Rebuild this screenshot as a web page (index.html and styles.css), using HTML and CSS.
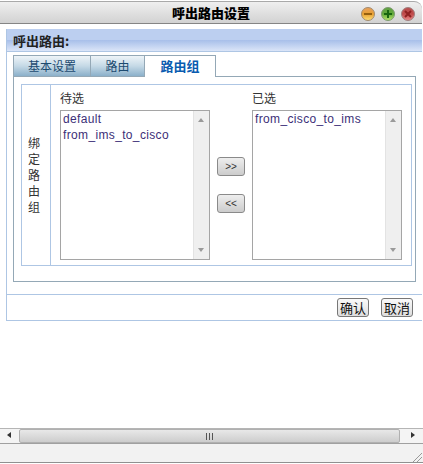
FILE: index.html
```html
<!DOCTYPE html>
<html lang="zh">
<head>
<meta charset="utf-8">
<title>呼出路由设置</title>
<link rel="stylesheet" href="styles.css">
</head>
<body>
<div class="window">
  <header class="titlebar">
    <span class="title">呼出路由设置</span>
    <div class="controls">
      <svg class="ctl" viewBox="0 0 14 14"><defs><linearGradient id="o" x1="0" y1="0" x2="0" y2="1"><stop offset="0" stop-color="#e8a060"/><stop offset=".5" stop-color="#e8a030"/><stop offset="1" stop-color="#ffe27a"/></linearGradient></defs><circle cx="7" cy="7" r="6.5" fill="url(#o)" stroke="#a08a70"/><rect x="3" y="6" width="8" height="2" fill="#96600e"/></svg>
      <svg class="ctl" viewBox="0 0 14 14"><defs><linearGradient id="g" x1="0" y1="0" x2="0" y2="1"><stop offset="0" stop-color="#5fa044"/><stop offset=".5" stop-color="#62aa3a"/><stop offset="1" stop-color="#bce870"/></linearGradient></defs><circle cx="7" cy="7" r="6.5" fill="url(#g)" stroke="#7c9a70"/><path d="M3 7h8M7 3v8" stroke="#17660f" stroke-width="2"/></svg>
      <svg class="ctl" viewBox="0 0 14 14"><defs><linearGradient id="r" x1="0" y1="0" x2="0" y2="1"><stop offset="0" stop-color="#b85050"/><stop offset=".5" stop-color="#c04a4a"/><stop offset="1" stop-color="#ea8a8a"/></linearGradient></defs><circle cx="7" cy="7" r="6.5" fill="url(#r)" stroke="#a08080"/><path d="M4 4l6 6M10 4l-6 6" stroke="#8e2020" stroke-width="2"/></svg>
    </div>
  </header>

  <section class="panel">
    <h1 class="panel-head">呼出路由:</h1>
    <div class="panel-body">
      <nav class="tabs">
        <span class="tab tab-first">基本设置</span>
        <span class="tab tab-second">路由</span>
        <span class="tab tab-active">路由组</span>
      </nav>
      <div class="tab-box">
        <div class="bind">
          <div class="bind-label">
            <span class="bind-char">绑</span>
            <span class="bind-char">定</span>
            <span class="bind-char">路</span>
            <span class="bind-char">由</span>
            <span class="bind-char">组</span>
          </div>
          <div class="bind-main">
            <div class="col">
              <div class="col-label">待选</div>
              <div class="list">
                <div class="items">
                  <div>default</div>
                  <div>from_ims_to_cisco</div>
                </div>
                <div class="vscroll"><i class="up"></i><i class="down"></i></div>
              </div>
            </div>
            <div class="moves">
              <button class="move">&gt;&gt;</button>
              <button class="move">&lt;&lt;</button>
            </div>
            <div class="col">
              <div class="col-label">已选</div>
              <div class="list">
                <div class="items">
                  <div>from_cisco_to_ims</div>
                </div>
                <div class="vscroll"><i class="up"></i><i class="down"></i></div>
              </div>
            </div>
          </div>
        </div>
      </div>
    </div>
    <footer class="panel-foot">
      <button class="action">确认</button>
      <button class="action">取消</button>
    </footer>
  </section>

  <div class="spacer"></div>

  <div class="hscroll">
    <i class="left"></i>
    <div class="thumb"><span class="grip"></span></div>
    <i class="right"></i>
  </div>
  <div class="status">
    <svg class="resize" viewBox="0 0 10 10"><path d="M1 10L10 1M5 10l5-5" stroke="#999" fill="none"/></svg>
  </div>
</div>
</body>
</html>
```

FILE: styles.css
```css
* { box-sizing: border-box; }
html, body { margin: 0; padding: 0; background: #fff; overflow: hidden; }
body { font-family: "Noto Sans CJK SC", "Liberation Sans", sans-serif; color: #333; }

.window { width: 423px; height: 464px; display: flex; flex-direction: column; padding-top: 1px; }

.titlebar {
  height: 23px; margin-right: 1px; display: flex; align-items: center; justify-content: center; position: relative;
  background: linear-gradient(#efefef, #d2d2d2);
  border-top: 1px solid #a9a9a9; border-bottom: 1px solid #858585; border-top-right-radius: 8px;
}
.title { font-size: 13px; font-weight: 900; color: #000; }
.controls { position: absolute; right: 7px; top: 5px; display: flex; gap: 6px; }
.ctl { width: 14px; height: 14px; display: block; }

.panel { margin: 5px 1px 0 6px; height: 292px; border: 1px solid #aec6e4; border-top: 0; border-right: 0; display: flex; flex-direction: column; }
.panel-head {
  margin: 0; height: 23px; padding-left: 6px; font-size: 13px; line-height: 23px; font-weight: 700; color: #222;
  background: linear-gradient(#bccff0 0, #bccff0 50%, #a9c0ea 52%, #dbe5f8 100%);
  border-bottom: 1px solid #aec6e4;
}
.panel-body { flex: 1; padding: 3px 6px 0 6px; border-bottom: 1px solid #aec6e4; }

.tabs { display: flex; height: 21px; position: relative; z-index: 1; }
.tab { font-size: 12px; text-align: center; line-height: 20px; color: #1c4a70; border: 1px solid #94a8b6; border-bottom: 0; border-left: 0;
  background: linear-gradient(#eef4f8, #c5d9e6 50%, #8bb0ca); }
.tab-first { width: 78px; border-left: 1px solid #94a8b6; }
.tab-second { width: 54px; }
.tab-active { width: 71px; height: 22px; font-size: 13px; font-weight: 700; color: #0a5cb0; background: #fff; border-color: #94a8b6; }

.tab-box { width: 403px; height: 206px; padding: 7px 3px 0 7px; border: 1px solid #94a8b6; }
.bind { display: flex; height: 182px; border: 1px solid #aec6e4; }
.bind-label { width: 29px; border-right: 1px solid #aec6e4; font-size: 12px; text-align: center; padding: 50px 4px 0 0; display: flex; flex-direction: column; }
.bind-char { height: 16px; line-height: 16px; }
.bind-main { flex: 1; display: flex; padding-left: 9px; }

.col { width: 150px; display: flex; flex-direction: column; }
.col-label { height: 25px; font-size: 12px; line-height: 25px; }
.list { width: 150px; height: 150px; border: 1px solid #a5a5a5; display: flex; background: #fff; }
.items { flex: 1; padding: 0 2px; font: 12px/16px "Liberation Sans", sans-serif; letter-spacing: .35px; color: #3c2f78; }
.vscroll { width: 16px; background: #efefef; border-left: 1px solid #e3e3e3; position: relative; }
.up, .down { position: absolute; left: 4px; width: 0; height: 0; border-left: 3.5px solid transparent; border-right: 3.5px solid transparent; }
.up { top: 7px; border-bottom: 4px solid #9a9a9a; }
.down { bottom: 7px; border-top: 4px solid #9a9a9a; }

.moves { width: 42px; display: flex; flex-direction: column; align-items: flex-start; padding: 72px 0 0 7px; gap: 18px; }
.move { width: 28px; height: 19px; padding: 0; font: 10px/1 "Liberation Sans", sans-serif; color: #333; border: 1px solid #8a8a8a; border-radius: 3px; background: linear-gradient(#eee, #ccc); }

.panel-foot { height: 25px; display: flex; justify-content: flex-end; gap: 12px; padding: 3px 9px 0 0; }
.action { width: 32px; height: 19px; padding: 0; font: 13px/17px "Noto Sans CJK SC", sans-serif; color: #111; border: 1px solid #777; border-radius: 3px; background: linear-gradient(#fafafa, #ddd); }

.spacer { flex: 1; }

.hscroll { height: 16px; display: flex; align-items: center; background: #f4f4f4; border-top: 1px solid #b5b5b5; border-bottom: 1px solid #a0a0a0; }
.left { width: 19px; flex: none; position: relative; height: 100%; }
.right { width: 23px; flex: none; position: relative; height: 100%; }
.left::after, .right::after { content: ""; position: absolute; top: 3px; left: 7px; border-top: 3.5px solid transparent; border-bottom: 3.5px solid transparent; }
.left::after { border-right: 4px solid #333; }
.right::after { border-left: 4px solid #333; left: 11px; }
.thumb { flex: 1; height: 14px; display: flex; align-items: center; justify-content: center; border: 1px solid #b0b0b0; border-radius: 2px; background: linear-gradient(#e8e8e8, #cdcdcd); }
.grip { width: 7px; height: 7px; background: repeating-linear-gradient(90deg, #555 0 1px, transparent 1px 3px); }

.status { height: 19px; margin-bottom: 1px; position: relative; background: #f2f2f2; border-bottom: 1px solid #909090; }
.resize { position: absolute; right: 1px; bottom: 0; width: 10px; height: 10px; }
```
